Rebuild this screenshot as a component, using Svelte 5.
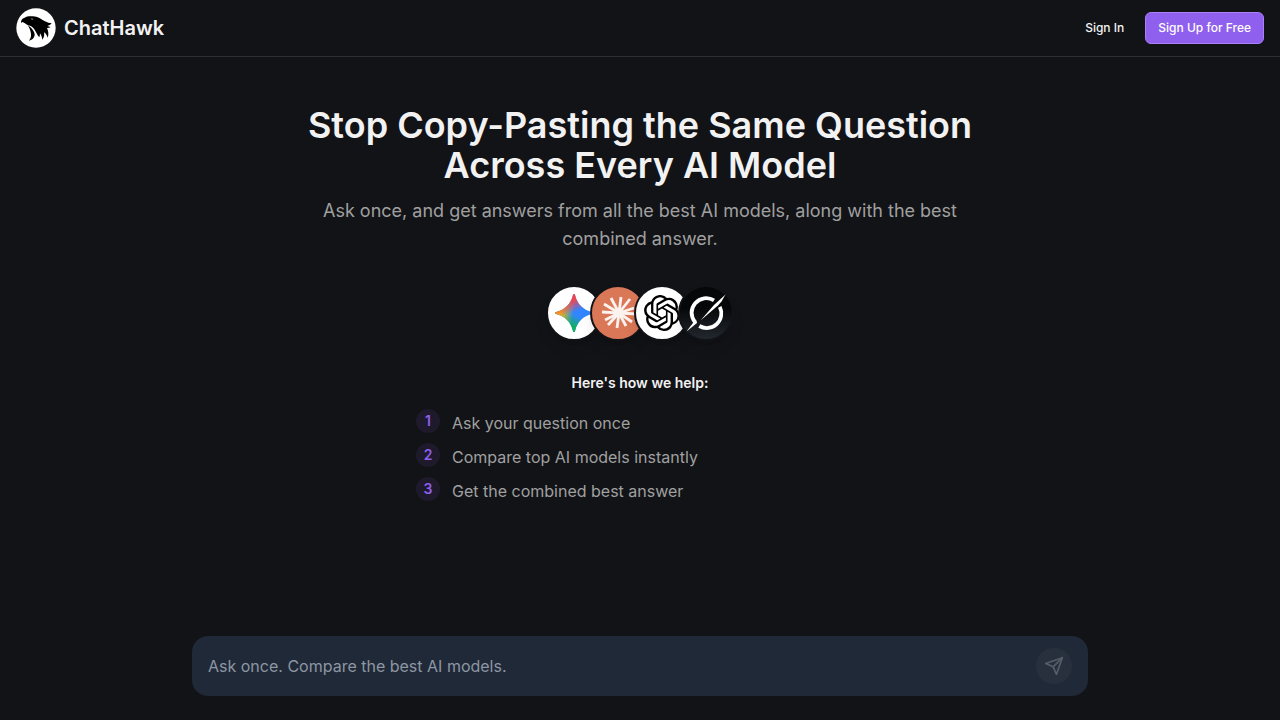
<script lang="ts">
	const steps = [
		'Ask your question once',
		'Compare top AI models instantly',
		'Get the combined best answer'
	];

	// tips of the Claude burst, measured from its centre
	const rays = [
		[2, -16],
		[11, -14],
		[15, -5],
		[18, 1],
		[13, 9],
		[7, 13],
		[-2, 15],
		[-11, 12],
		[-14, 7],
		[-17, -1],
		[-15, -9],
		[-8, -15]
	];

	let question = $state('');
</script>

<div class="page">
	<header>
		<a class="brand" href="/">
			<svg width="40" height="40" viewBox="12 12 120 120" aria-hidden="true">
				<circle cx="72" cy="72" r="59" fill="#fff" />
				<path
					d="M27 58C26 50 30 43 38 41C45 36 54 36 62 37C72 37 79 41 86 44C95 50 105 56 119 58C115 63 111 65 106 66L116 69C113 71 109 72 105 72C109 81 111 91 107 101C104 92 101 88 96 85C98 94 96 101 91 107C90 99 88 95 84 88C84 93 83 97 82 100C75 92 73 85 68 77C61 69 57 65 48 64C41 60 36 55 31 54C29 55 28 56 27 58Z"
				/>
				<path d="M47 63C57 70 67 80 68 91C68 101 61 108 51 110C55 105 58 98 57 90C56 80 52 71 47 63Z" />
				<path d="M56 43l8 1-2 4c-3 0-5-2-6-5z" fill="#777" />
			</svg>
			<span>ChatHawk</span>
		</a>
		<nav>
			<button class="btn">Sign In</button>
			<button class="btn primary">Sign Up for Free</button>
		</nav>
	</header>

	<main>
		<h1>Stop Copy-Pasting the Same Question Across Every AI Model</h1>
		<p class="lead">
			Ask once, and get answers from all the best AI models, along with the best combined answer.
		</p>

		<div class="models">
			<div class="model gemini">
				<svg width="52" height="52" viewBox="0 0 52 52" role="img" aria-label="Gemini">
					<defs>
						<linearGradient id="g-base" x1="14" y1="36" x2="36" y2="16" gradientUnits="userSpaceOnUse">
							<stop offset="0.2" stop-color="#2f8de0" />
							<stop offset="0.6" stop-color="#3186ff" />
						</linearGradient>
						<linearGradient id="g-red" x1="23" y1="8" x2="29" y2="24" gradientUnits="userSpaceOnUse">
							<stop offset="0.3" stop-color="#ef4352" />
							<stop offset="1" stop-color="#ef4352" stop-opacity="0" />
						</linearGradient>
						<linearGradient id="g-yellow" x1="7" y1="24" x2="25" y2="28" gradientUnits="userSpaceOnUse">
							<stop offset="0.3" stop-color="#f5bd16" />
							<stop offset="1" stop-color="#f5bd16" stop-opacity="0" />
						</linearGradient>
						<linearGradient id="g-green" x1="21" y1="44" x2="28" y2="29" gradientUnits="userSpaceOnUse">
							<stop offset="0.3" stop-color="#0eb15d" />
							<stop offset="1" stop-color="#0eb15d" stop-opacity="0" />
						</linearGradient>
					</defs>
					{#each ['g-base', 'g-green', 'g-yellow', 'g-red'] as fill}
						<path
							d="M26 7C27 7 27 8 27.300 9C29.500 17 35 22.500 43 24.700C44 25 45 25 45 26C45 27 44 27 43 27.300C35 29.500 29.500 35 27.300 43C27 44 27 45 26 45C25 45 25 44 24.700 43C22.500 35 17 29.500 9 27.300C8 27 7 27 7 26C7 25 8 25 9 24.700C17 22.500 22.500 17 24.700 9C25 8 25 7 26 7Z"
							fill="url(#{fill})"
						/>
					{/each}
				</svg>
			</div>
			<div class="model claude">
				<svg width="52" height="52" viewBox="-27 -26 52 52" role="img" aria-label="Claude">
					{#each rays as [x, y]}
						<line x1="0" y1="0" x2={x} y2={y} stroke="#fcf2ee" stroke-width="2.800" />
					{/each}
					<circle r="4.500" fill="#fcf2ee" />
				</svg>
			</div>
			<div class="model openai">
				<svg width="36" height="36" viewBox="0 0 24 24" role="img" aria-label="ChatGPT">
					<path
						d="M22.2819 9.8211a5.9847 5.9847 0 0 0-.5157-4.9108 6.0462 6.0462 0 0 0-6.5098-2.9A6.0651 6.0651 0 0 0 4.9807 4.1818a5.9847 5.9847 0 0 0-3.9977 2.9 6.0462 6.0462 0 0 0 .7427 7.0966 5.98 5.98 0 0 0 .511 4.9107 6.051 6.051 0 0 0 6.5146 2.9001A5.9847 5.9847 0 0 0 13.2599 24a6.0557 6.0557 0 0 0 5.7718-4.2058 5.9894 5.9894 0 0 0 3.9977-2.9001 6.0557 6.0557 0 0 0-.7475-7.0729zm-9.022 12.6081a4.4755 4.4755 0 0 1-2.8764-1.0408l.1419-.0804 4.7783-2.7582a.7948.7948 0 0 0 .3927-.6813v-6.7369l2.02 1.1686a.071.071 0 0 1 .038.052v5.5826a4.504 4.504 0 0 1-4.4945 4.4944zm-9.6607-4.1254a4.4708 4.4708 0 0 1-.5346-3.0137l.142.0852 4.783 2.7582a.7712.7712 0 0 0 .7806 0l5.8428-3.3685v2.3324a.0804.0804 0 0 1-.0332.0615L9.74 19.9502a4.4992 4.4992 0 0 1-6.1408-1.6464zM2.3408 7.8956a4.485 4.485 0 0 1 2.3655-1.9728V11.6a.7664.7664 0 0 0 .3879.6765l5.8144 3.3543-2.0201 1.1685a.0757.0757 0 0 1-.071 0l-4.8303-2.7865A4.504 4.504 0 0 1 2.3408 7.872zm16.5963 3.8558L13.1038 8.364 15.1192 7.2a.0757.0757 0 0 1 .071 0l4.8303 2.7913a4.4944 4.4944 0 0 1-.6765 8.1042v-5.6772a.79.79 0 0 0-.407-.667zm2.0107-3.0231l-.142-.0852-4.7735-2.7818a.7759.7759 0 0 0-.7854 0L9.409 9.2297V6.8974a.0662.0662 0 0 1 .0284-.0615l4.8303-2.7866a4.4992 4.4992 0 0 1 6.6802 4.66zM8.3065 12.863l-2.02-1.1638a.0804.0804 0 0 1-.038-.0567V6.0742a4.4992 4.4992 0 0 1 7.3757-3.4537l-.142.0805L8.704 5.459a.7948.7948 0 0 0-.3927.6813zm1.0976-2.3654l2.602-1.4998 2.6069 1.4998v2.9994l-2.5974 1.4997-2.6067-1.4997Z"
					/>
				</svg>
			</div>
			<div class="model grok">
				<svg width="52" height="52" viewBox="0 0 52 52" role="img" aria-label="Grok">
					<g fill="none" stroke="#fff" stroke-width="3.800">
						<path d="M34 13.400A14.600 14.600 0 0 0 15 35.100" />
						<path d="M39.800 19.900A14.600 14.600 0 0 1 19.300 39" />
					</g>
					<g fill="#fff">
						<path d="M20.500 33.500L34 18L45.500 7.500L41.500 14.500L38 18.500Z" />
						<path d="M6.500 44.500L13.300 35.500L16.500 33.500L17 36Z" />
					</g>
				</svg>
			</div>
		</div>

		<h2>Here's how we help:</h2>
		<ol>
			{#each steps as step, i}
				<li>
					<span class="num">{i + 1}</span>
					<span>{step}</span>
				</li>
			{/each}
		</ol>
	</main>

	<form onsubmit={(e) => e.preventDefault()}>
		<input
			type="text"
			aria-label="Your question"
			placeholder="Ask once. Compare the best AI models."
			bind:value={question}
		/>
		<button class="send" aria-label="Send" disabled={!question}>
			<svg
				width="20"
				height="20"
				viewBox="0 0 24 24"
				fill="none"
				stroke="currentColor"
				stroke-width="2"
				stroke-linecap="round"
				stroke-linejoin="round"
			>
				<path d="m22 2-7 20-4-9-9-4Z" />
				<path d="M22 2 11 13" />
			</svg>
		</button>
	</form>
</div>

<style>
	:global(body) {
		background: #121317;
	}

	.page {
		min-height: 100vh;
		display: flex;
		flex-direction: column;
		background: #121317;
		color: #f2f2f2;
		font-family: Inter, sans-serif;
	}

	header {
		display: flex;
		align-items: center;
		justify-content: space-between;
		padding: 8px 16px;
		border-bottom: 1px solid #2e2f33;
	}

	.brand {
		display: flex;
		align-items: center;
		gap: 8px;
		color: inherit;
		font-size: 20px;
		font-weight: 600;
		line-height: 28px;
		text-decoration: none;
	}

	nav {
		display: flex;
		gap: 8px;
	}

	.btn {
		height: 32px;
		padding: 0 12px;
		border: 1px solid transparent;
		border-radius: 6px;
		background: none;
		color: #f2f2f2;
		font-family: inherit;
		font-size: 12px;
		font-weight: 500;
		line-height: 16px;
	}

	.primary {
		background: #8f5fed;
		border-color: #a980f5;
		color: #fff;
	}

	main {
		flex: 1;
		display: flex;
		flex-direction: column;
		align-items: center;
		padding: 48px 16px 24px;
	}

	h1 {
		max-width: 672px;
		margin: 0 0 12px;
		font-size: 36px;
		font-weight: 600;
		line-height: 40px;
		text-align: center;
	}

	.lead {
		max-width: 672px;
		margin: 0 0 32px;
		color: #a0a0a0;
		font-size: 18px;
		line-height: 28px;
		text-align: center;
	}

	.models {
		display: flex;
		margin-bottom: 32px;
	}

	.model {
		display: flex;
		align-items: center;
		justify-content: center;
		width: 52px;
		height: 52px;
		border: 2px solid #121317;
		border-radius: 50%;
		box-shadow: 0 10px 15px -3px rgb(0 0 0 / 0.1), 0 4px 6px -4px rgb(0 0 0 / 0.1);
	}

	.model + .model {
		margin-left: -12px;
	}

	.gemini,
	.openai {
		background: #fff;
	}

	.claude {
		background: #d97757;
	}

	.grok {
		background: linear-gradient(#060708 40%, #22282f);
	}

	h2 {
		margin: 0 0 16px;
		font-size: 14px;
		font-weight: 600;
		line-height: 20px;
	}

	ol {
		display: flex;
		flex-direction: column;
		gap: 6px;
		width: 100%;
		max-width: 448px;
		margin: 0;
		padding: 0;
		list-style: none;
	}

	li {
		display: flex;
		align-items: flex-start;
		gap: 12px;
		color: #a0a0a0;
		font-size: 16px;
		line-height: 28px;
	}

	.num {
		width: 24px;
		height: 24px;
		border-radius: 50%;
		background: #1e1a2c;
		color: #8f5fed;
		font-size: 14px;
		font-weight: 600;
		line-height: 24px;
		text-align: center;
	}

	form {
		display: flex;
		align-items: center;
		gap: 12px;
		box-sizing: border-box;
		width: calc(100% - 32px);
		max-width: 896px;
		margin: 0 auto 24px;
		padding: 12px 16px;
		border-radius: 16px;
		background: #202937;
	}

	input {
		flex: 1;
		min-width: 0;
		height: 36px;
		padding: 0;
		border: none;
		outline: none;
		background: none;
		color: #f2f2f2;
		font-family: inherit;
		font-size: 16px;
	}

	input::placeholder {
		color: #8d96a3;
	}

	.send {
		display: flex;
		align-items: center;
		justify-content: center;
		width: 36px;
		height: 36px;
		padding: 0;
		border: none;
		border-radius: 50%;
		background: #28303d;
		color: #565d68;
	}
</style>
